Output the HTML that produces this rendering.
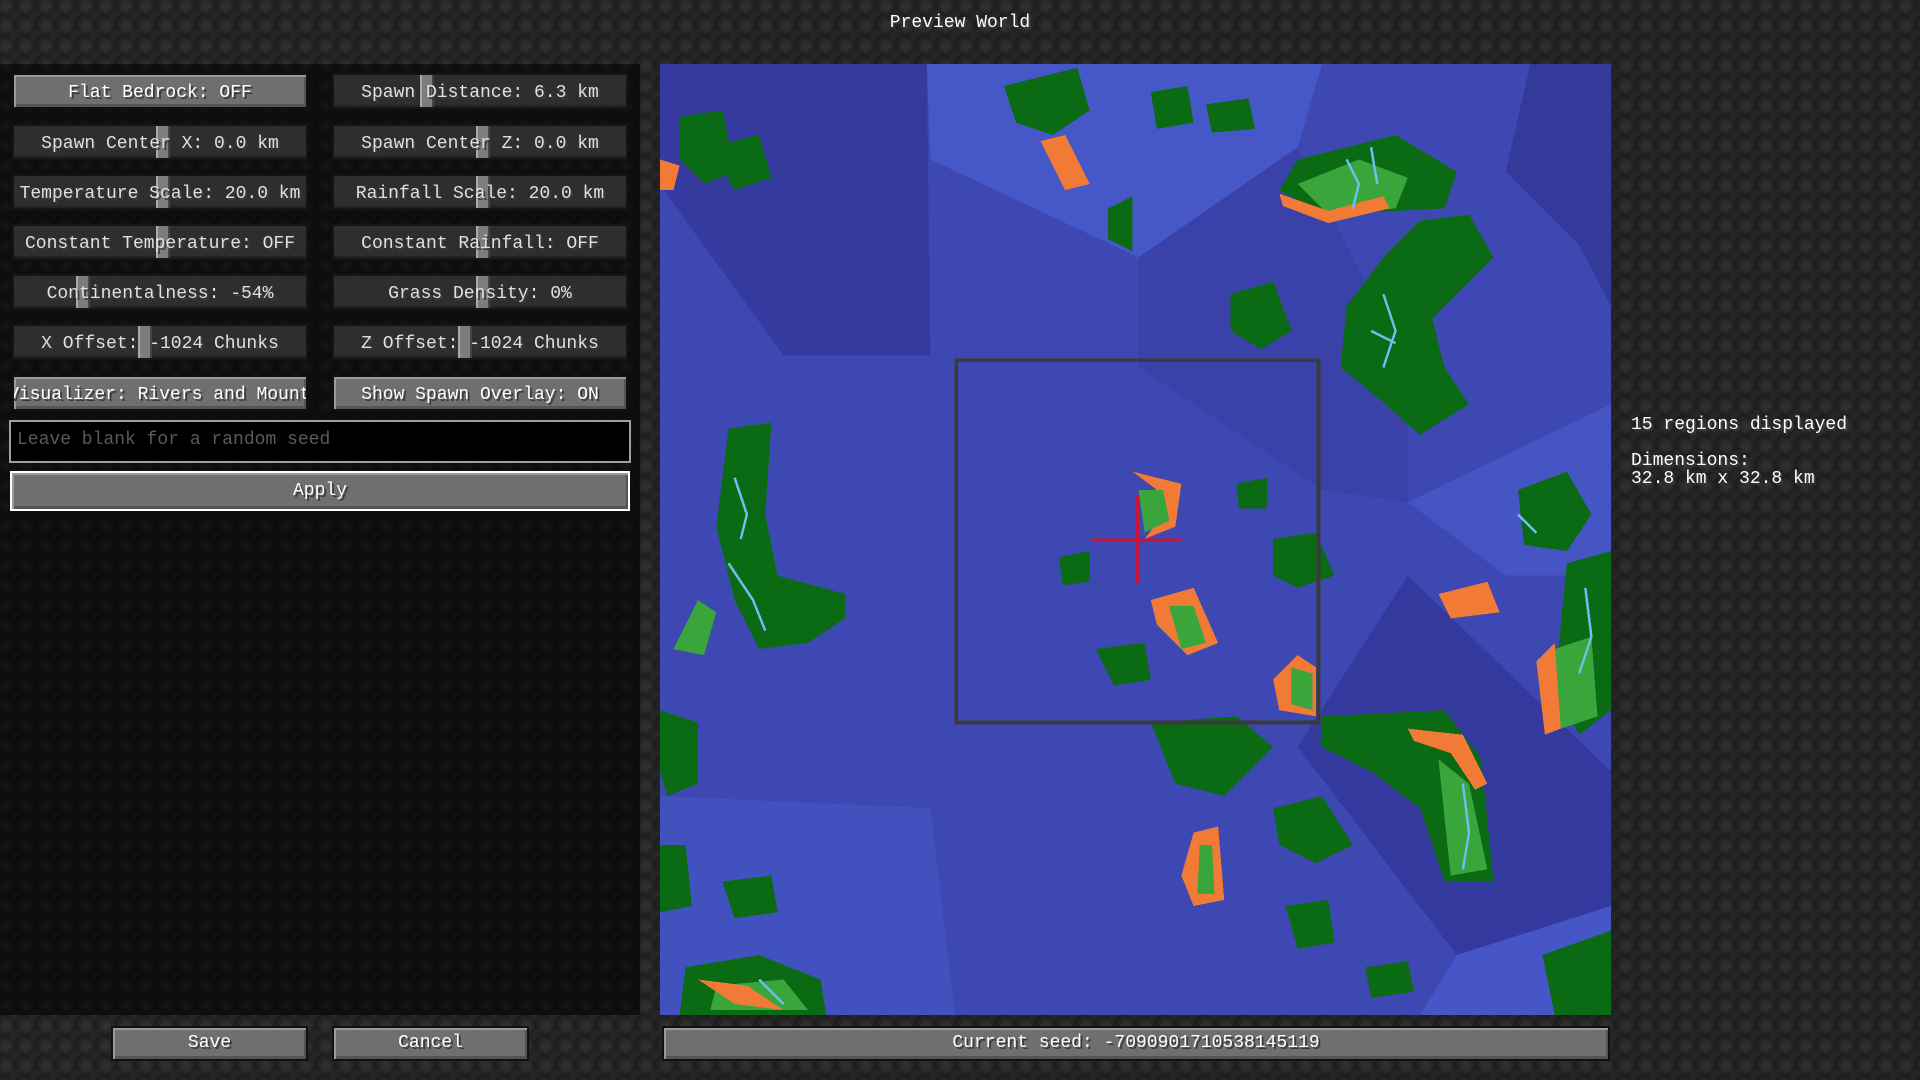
<!DOCTYPE html>
<html><head><meta charset="utf-8"><style>
html,body{margin:0;padding:0}
body{width:1920px;height:1080px;position:relative;overflow:hidden;font-family:"Liberation Mono","DejaVu Sans Mono",monospace;color:#fff;
background-color:#262626;
background-image:radial-gradient(circle at 30% 30%,#333 0,#2b2b2b 5px,#1e1e1e 9px,transparent 10px),radial-gradient(circle at 70% 70%,#303030 0,#262626 5px,#1c1c1c 9px,transparent 10px);
background-size:20px 20px,20px 20px;background-position:0 0,10px 10px}
.t{position:absolute;white-space:nowrap;font-size:18px;text-shadow:2px 2px 0 #3a3a3a}
.panel{position:absolute;left:0;top:64px;width:640px;height:951px;background:rgba(0,0,0,.6)}
.btn{position:absolute;height:36px;line-height:36px;text-align:center;font-size:18px;white-space:nowrap;overflow:hidden;text-shadow:2px 2px 0 #3a3a3a;box-sizing:border-box}
.g{background:#6f6f6f;border:2px solid #111;box-shadow:inset 2px 2px 0 #9a9a9a,inset -2px -3px 0 #555;color:#fff}
.s{background:#2e2e2e;border:2px solid #151515;box-shadow:inset 0 -2px 0 #222;color:#e0e0e0}
.k{position:absolute;top:0;width:14px;height:32px;background:#7d7d7d;border-left:2px solid #aaa;border-right:2px solid #444;box-sizing:border-box}
</style></head><body>
<div class="t" style="left:0;width:1920px;text-align:center;top:13px">Preview World</div>
<div class="panel"></div>

<div class="btn g" style="left:12px;top:73px;width:296px">Flat Bedrock: OFF</div>
<div class="btn s" style="left:332px;top:73px;width:296px"><div class="k" style="left:86px"></div><span style="position:relative">Spawn Distance: 6.3 km</span></div>
<div class="btn s" style="left:12px;top:124px;width:296px"><div class="k" style="left:142px"></div><span style="position:relative">Spawn Center X: 0.0 km</span></div>
<div class="btn s" style="left:332px;top:124px;width:296px"><div class="k" style="left:142px"></div><span style="position:relative">Spawn Center Z: 0.0 km</span></div>
<div class="btn s" style="left:12px;top:174px;width:296px"><div class="k" style="left:142px"></div><span style="position:relative">Temperature Scale: 20.0 km</span></div>
<div class="btn s" style="left:332px;top:174px;width:296px"><div class="k" style="left:142px"></div><span style="position:relative">Rainfall Scale: 20.0 km</span></div>
<div class="btn s" style="left:12px;top:224px;width:296px"><div class="k" style="left:142px"></div><span style="position:relative">Constant Temperature: OFF</span></div>
<div class="btn s" style="left:332px;top:224px;width:296px"><div class="k" style="left:142px"></div><span style="position:relative">Constant Rainfall: OFF</span></div>
<div class="btn s" style="left:12px;top:274px;width:296px"><div class="k" style="left:62px"></div><span style="position:relative">Continentalness: -54%</span></div>
<div class="btn s" style="left:332px;top:274px;width:296px"><div class="k" style="left:142px"></div><span style="position:relative">Grass Density: 0%</span></div>
<div class="btn s" style="left:12px;top:324px;width:296px"><div class="k" style="left:124px"></div><span style="position:relative">X Offset: -1024 Chunks</span></div>
<div class="btn s" style="left:332px;top:324px;width:296px"><div class="k" style="left:124px"></div><span style="position:relative">Z Offset: -1024 Chunks</span></div>
<div class="btn g" style="left:12px;top:375px;width:296px;text-align:left;text-indent:-6px">Visualizer: Rivers and Mountains</div>
<div class="btn g" style="left:332px;top:375px;width:296px">Show Spawn Overlay: ON</div>

<div style="position:absolute;left:9px;top:420px;width:622px;height:43px;background:#000;border:2px solid #a0a0a0;box-sizing:border-box"></div>
<div class="t" style="left:17px;top:430px;color:#5a5a5a;text-shadow:none">Leave blank for a random seed</div>
<div class="btn g" style="left:10px;top:471px;width:620px;height:40px;line-height:36px;border-color:#fff">Apply</div>

<svg style="position:absolute;left:660px;top:64px" width="951" height="951" viewBox="539 52 777 777" shape-rendering="crispEdges">
<rect x="539" y="52" width="777" height="777" fill="#3d48b3"/>
<polygon points="539,52 757,52 760,290 640,290 560,180 539,150" fill="#353b9e"/>
<polygon points="757,52 1080,52 1060,120 930,210 760,130" fill="#4657c7"/>
<polygon points="930,210 1060,120 1150,300 1150,410 1080,400 930,300" fill="#3a42aa"/>
<polygon points="1250,52 1316,52 1316,250 1290,200 1230,140" fill="#333a9a"/>
<polygon points="1150,410 1316,330 1316,470 1230,470" fill="#4555c4"/>
<polygon points="1060,610 1150,470 1316,630 1316,740 1190,780" fill="#34399d"/>
<polygon points="539,650 760,660 780,829 539,829" fill="#4151bd"/>
<polygon points="1190,780 1316,740 1316,829 1160,829" fill="#4656c6"/>
<g fill="#0b6a14">
<polygon points="555,95 590,90 600,140 575,150 555,130"/>
<polygon points="580,120 620,110 630,145 600,155"/>
<polygon points="820,70 880,55 890,90 860,110 830,100"/>
<polygon points="940,75 970,70 975,100 945,105"/>
<polygon points="985,85 1020,80 1025,105 990,108"/>
<polygon points="1060,130 1140,110 1190,140 1180,170 1080,175 1045,155"/>
<polygon points="1100,250 1130,210 1160,180 1200,175 1220,210 1170,260 1180,300 1200,330 1160,355 1120,320 1095,300"/>
<polygon points="1005,240 1040,230 1055,270 1030,285 1005,270"/>
<polygon points="595,350 630,345 625,420 635,470 690,485 690,505 660,525 620,530 600,490 585,430"/>
<polygon points="1240,400 1280,385 1300,420 1280,450 1245,445"/>
<polygon points="1040,440 1075,435 1090,470 1060,480 1040,470"/>
<polygon points="895,530 935,525 940,555 910,560"/>
<polygon points="865,455 890,450 890,475 868,478"/>
<polygon points="1010,395 1035,390 1035,415 1012,415"/>
<polygon points="1080,585 1180,580 1210,620 1220,720 1180,720 1160,660 1120,630 1080,610"/>
<polygon points="1040,660 1080,650 1105,690 1075,705 1045,690"/>
<polygon points="940,590 1010,585 1040,610 1000,650 960,640"/>
<polygon points="1280,460 1316,450 1316,580 1290,600 1270,560"/>
<polygon points="539,580 570,590 570,640 545,650 539,630"/>
<polygon points="539,690 560,690 565,740 539,745"/>
<polygon points="590,720 630,715 635,745 600,750"/>
<polygon points="1050,740 1085,735 1090,770 1060,775"/>
<polygon points="1115,790 1150,785 1155,810 1120,815"/>
<polygon points="560,790 620,780 670,800 675,829 555,829"/>
<polygon points="1260,780 1316,760 1316,829 1270,829"/>
<polygon points="905,170 925,160 925,205 905,195"/>
</g>
<g fill="#3aa53a">
<polygon points="1060,150 1110,130 1150,145 1140,170 1085,175"/>
<polygon points="1175,620 1200,640 1215,710 1185,715"/>
<polygon points="570,490 585,500 575,535 550,530"/>
<polygon points="1270,530 1300,520 1305,585 1275,595"/>
<polygon points="585,805 640,800 660,825 580,825"/>
</g>
<g fill="#f07a36">
<polygon points="1045,158 1085,172 1130,160 1135,170 1085,182 1048,168"/>
<polygon points="925,385 965,395 960,430 935,440 950,420 945,400"/>
<polygon points="940,490 975,480 995,525 970,535 945,510"/>
<polygon points="1040,555 1060,535 1075,545 1075,585 1045,580"/>
<polygon points="975,680 995,675 1000,735 975,740 965,715"/>
<polygon points="1175,485 1215,475 1225,500 1185,505"/>
<polygon points="1150,595 1195,600 1215,640 1205,645 1185,615 1155,605"/>
<polygon points="1255,540 1270,525 1275,595 1262,600"/>
<polygon points="850,115 870,110 890,150 870,155"/>
<polygon points="539,130 555,135 550,155 539,155"/>
<polygon points="570,800 610,805 640,825 600,820"/>
</g>
<g fill="#3aa53a"><polygon points="930,400 950,400 955,425 935,435"/><polygon points="955,495 975,495 985,525 965,530"/><polygon points="1055,545 1072,550 1072,580 1055,575"/><polygon points="980,690 990,690 992,730 978,730"/></g>
<g stroke="#6cc0f0" stroke-width="2" fill="none">
<path d="M1100,130 l10,20 l-5,20 M1120,120 l5,30 M1130,240 l10,30 l-10,30 M1120,270 l20,10 M600,390 l10,30 l-5,20 M595,460 l20,30 l10,25 M1195,640 l5,40 l-5,30 M1295,480 l5,40 l-10,30 M620,800 l20,20 M1240,420 l15,15"/>
</g>
<rect x="781" y="294" width="296" height="296" fill="none" stroke="#3a3a3a" stroke-width="3"/>
<path d="M892,441 H965 M929,405 V477" stroke="#c8143a" stroke-width="3"/>
</svg>

<div class="t" style="left:1631px;top:415px;font-size:18px">15 regions displayed</div>
<div class="t" style="left:1631px;top:452px;font-size:18px;line-height:18px">Dimensions:<br>32.8 km x 32.8 km</div>

<div class="btn g" style="left:111px;top:1026px;width:197px;height:35px;line-height:31px">Save</div>
<div class="btn g" style="left:332px;top:1026px;width:197px;height:35px;line-height:31px">Cancel</div>
<div class="btn g" style="left:662px;top:1026px;width:948px;height:35px;line-height:31px">Current seed: -7090901710538145119</div>
</body></html>
